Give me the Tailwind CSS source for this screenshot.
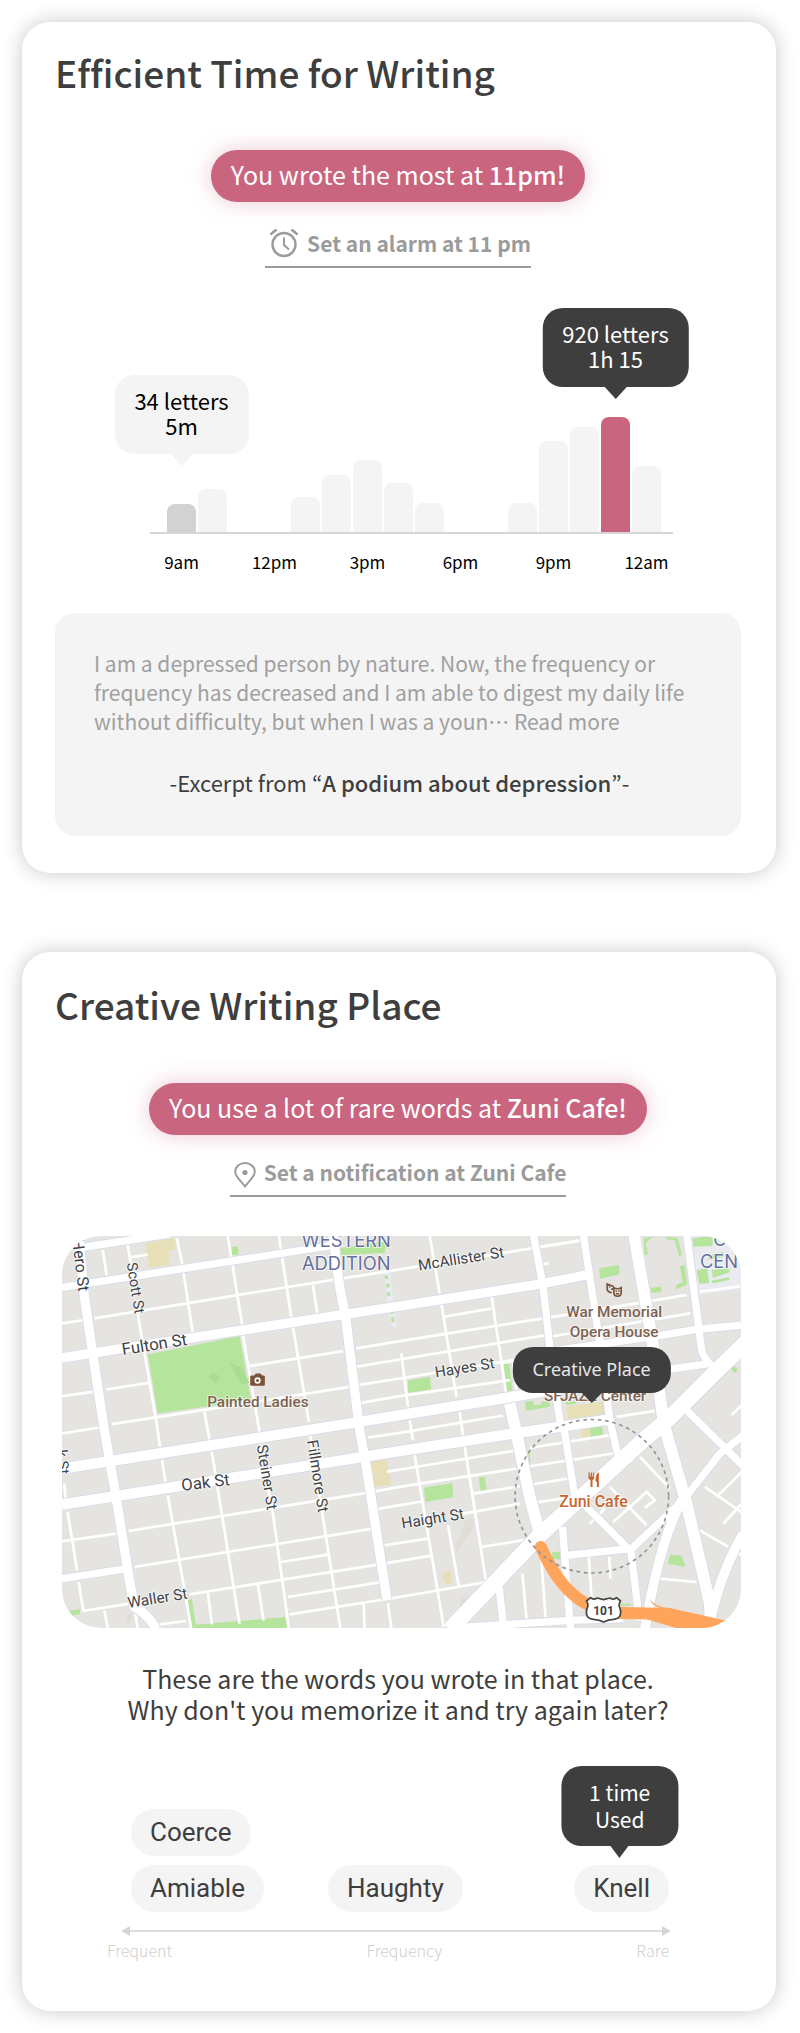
<!DOCTYPE html>
<html lang="en">
<head>
<meta charset="utf-8">
<meta name="viewport" content="width=device-width, initial-scale=1">
<title>Writing insights</title>
<script src="https://cdn.jsdelivr.net/npm/@tailwindcss/browser@4"></script>
</head>
<body class="bg-white text-[#3e3e3e] font-['Noto_Sans_CJK_KR','Noto_Sans',sans-serif] [font-variant-ligatures:none]">
<main class="flex flex-col gap-[79px] pt-[22px] pr-6 pb-[22px] pl-[22px]">

  <section class="rounded-[28px] bg-white pt-[26px] pr-[35px] pb-[37px] pl-[33px] shadow-[0_0_20px_rgba(0,0,0,0.22)]">
    <h1 class="text-[37px] leading-12 font-medium">Efficient Time for Writing</h1>
    <div class="mt-[54px] flex flex-col items-center">
      <p class="rounded-full bg-[#c9657f] px-5 pb-1 text-[25px] leading-12 text-white shadow-[0_0_22px_rgba(201,101,127,0.35)]">You wrote the most at <strong class="font-medium">11pm!</strong></p>
      <button type="button" class="mt-[18px] flex h-12 items-center gap-2 border-b-2 border-[#9b9b9b] pl-1 text-[21px] leading-7 font-bold text-[#9b9b9b]">
        <svg class="size-[30px]" viewBox="0 0 30 30" fill="none" stroke="currentColor" stroke-width="2.4" aria-hidden="true"><circle cx="15" cy="16.500" r="11.500"/><path d="M15 9.500v7.500l5 4.500" stroke-width="2"/><path d="M1.500 6.500 7.500 1.500M28.500 6.500 22.500 1.500"/></svg>
        <span>Set an alarm at 11 pm</span>
      </button>
    </div>

    <div class="mt-10 mr-[68px] ml-[95px]">
      <div class="grid h-[226px] grid-cols-16 items-end gap-0.5 border-b-2 border-[#d6d6d6] pr-3 pl-[17px]">
        <div class="relative col-start-1 h-7 rounded-t-lg bg-[#d2d2d2]">
          <div class="absolute bottom-full left-1/2 mb-[50px] -translate-x-1/2 rounded-[20px] bg-[#f4f4f4] px-5 pt-[13px] pb-4 text-center text-[22px] leading-[25px] whitespace-nowrap text-black">34 letters<br>5m
            <svg class="absolute top-full left-1/2 h-3 w-[22px] -translate-x-1/2" viewBox="0 0 22 12" fill="#f4f4f4" aria-hidden="true"><path d="M0 0h22L11 12z"/></svg>
          </div>
        </div>
        <div class="col-start-2 h-[43px] rounded-t-lg bg-[#f4f4f4]"></div>
        <div class="col-start-5 h-[35px] rounded-t-lg bg-[#f4f4f4]"></div>
        <div class="col-start-6 h-[57px] rounded-t-lg bg-[#f4f4f4]"></div>
        <div class="col-start-7 h-[72px] rounded-t-lg bg-[#f4f4f4]"></div>
        <div class="col-start-8 h-[49px] rounded-t-lg bg-[#f4f4f4]"></div>
        <div class="col-start-9 h-[29px] rounded-t-lg bg-[#f4f4f4]"></div>
        <div class="col-start-12 h-[29px] rounded-t-lg bg-[#f4f4f4]"></div>
        <div class="col-start-13 h-[91px] rounded-t-lg bg-[#f4f4f4]"></div>
        <div class="col-start-14 h-[105px] rounded-t-lg bg-[#f4f4f4]"></div>
        <div class="relative col-start-15 h-[115px] rounded-t-lg bg-[#c9657f]">
          <div class="absolute bottom-full left-1/2 mb-[30px] -translate-x-1/2 rounded-[20px] bg-[#3e3e3e] px-5 pt-[13px] pb-4 text-center text-[22px] leading-[25px] whitespace-nowrap text-white">920 letters<br>1h 15
            <svg class="absolute top-full left-1/2 h-3 w-[22px] -translate-x-1/2" viewBox="0 0 22 12" fill="#3e3e3e" aria-hidden="true"><path d="M0 0h22L11 12z"/></svg>
          </div>
        </div>
        <div class="col-start-16 h-[66px] rounded-t-lg bg-[#f4f4f4]"></div>
      </div>
      <div class="mt-4 grid grid-cols-16 gap-0.5 pr-3 pl-[17px] text-[17px] leading-6 whitespace-nowrap text-black">
        <span class="col-start-1 flex justify-center">9am</span>
        <span class="col-start-4 flex justify-center">12pm</span>
        <span class="col-start-7 flex justify-center">3pm</span>
        <span class="col-start-10 flex justify-center">6pm</span>
        <span class="col-start-13 flex justify-center">9pm</span>
        <span class="col-start-16 flex justify-center">12am</span>
      </div>
    </div>

    <div class="mt-[39px] rounded-[20px] bg-[#f4f4f4] pt-9 pr-9 pb-[39px] pl-[39px] leading-[29px]">
      <p class="text-[21px] text-[#a0a0a0]">I am a depressed person by nature. Now, the frequency or frequency has decreased and I am able to digest my daily life without difficulty, but when I was a youn<span class="font-['Noto_Sans_CJK_JP',sans-serif]" lang="ja">…</span> <a href="#read-more">Read more</a></p>
      <p class="mt-8 text-center text-[22px]">-Excerpt from “<b class="font-medium">A podium about depression</b>”-</p>
    </div>
  </section>

  <section class="rounded-[28px] bg-white pt-7 pr-[35px] pb-[49px] pl-[33px] shadow-[0_0_20px_rgba(0,0,0,0.22)]">
    <h2 class="text-[37px] leading-12 font-medium">Creative Writing Place</h2>
    <div class="mt-[55px] flex flex-col items-center">
      <p class="rounded-full bg-[#c9657f] px-5 pb-1 text-[25px] leading-12 text-white shadow-[0_0_22px_rgba(201,101,127,0.35)]">You use a lot of rare words at <strong class="font-medium">Zuni Cafe!</strong></p>
      <button type="button" class="mt-[18px] flex h-11 items-center gap-2 border-b-2 border-[#9b9b9b] pb-1 pl-1 text-[21px] leading-7 font-bold text-[#9b9b9b]">
        <svg class="mt-1.5 h-[26px] w-[22px]" viewBox="0 0 22 26" fill="none" stroke="currentColor" stroke-width="2" aria-hidden="true"><path d="M11 24.500C6 18 1.200 14.500 1.200 9.800a9.800 8.800 0 0 1 19.600 0C20.800 14.500 16 18 11 24.500Z"/><circle cx="11" cy="10.500" r="2.600" fill="currentColor" stroke="none"/></svg>
        <span>Set a notification at Zuni Cafe</span>
      </button>
    </div>

    <div class="relative mt-[39px] ml-[7px]">
      <svg class="block w-full rounded-[39px]" viewBox="38 48 2035 1176" role="img" aria-label="Map around Zuni Cafe" font-family="Roboto, sans-serif" font-weight="500">
        <rect x="38" y="48" width="2035" height="1176" fill="#e5e4e0"/>
        <path fill="#e9ebf0" d="M1915 48H2073V205L1945 225zM1000 150h20l22 170h-16z"/>
        <g fill="#b5e59c">
          <path d="M295 403 570 348 605 540 325 580ZM545 82l20-4 3 26-22 2zM872 84l135-20v34l-133 8zM415 1140l12-5 12 78 268-23 5 34H425zM60 1172l32-6v16l-25 4zM1075 480l66-10 4 38-70 10zM1362 432l16-2 10 82-20 2zM1425 545l25-3 4 14 20-3v-8l26-3v18l-70 12zM1123 802l85-13 3 42-84 14zM1287 772l18-3 6 40-18 4zM1647 145l60-10 2 28-58 13zM1782 55l30-7-24 20 6 35-10 3zM1850 50l33 3 13 52-8 4-14-48-24-3zM1890 138l14-3 8 58-34 15v-12l20-10zM1802 204l30-5 3 16-30 4zM1928 55l60-7v30l-58 2zM1940 150l32-6 6 45-30 3zM1975 105l45-10v15l-45 10zM1985 150l50-6 6 12-52 18zM1985 182l52-10v8l-50 10zM2042 445l10-8 12 12-10 10zM1860 1003l35 3 12 34-54-10zM1507 995l25-1v24l-25-3zM1620 615l36-5 4 36-38 4zM1712 1150h30v6h-30zM1546 545l28-2 8 8-32 4zM1434 692h4l4 36h-5zM1005 165l10 2v10h-10zM1010 190l10 2v10h-10zM1012 215l10 2v10h-10zM1022 270l9 2v10h-9zM1025 290l9 2v14h-9z"/>
          <path fill="#a9dd91" d="M540 425l35 18 25 45-25 5zM477 472l14-15 23 13-15 16z"/>
        </g>
        <path fill="#e6dfb7" d="M287 68l90-15v35l-20 4 5 42-62 10zM962 725l50-8 12 75-50 8zM1548 560l115-16 8 36-115 18zM1595 620l25-4 3 33-26 4zM1175 1060l28-10 6 40-22 2z"/>
        <path fill="#dfddd6" d="M1245 900l30-5-10 40-45 60-5-20 22-35zM1235 1130l30 3-30 60-12-8zM235 1180l15 5-8 22-12-4z"/>

        <g fill="none" stroke="#fff" stroke-width="8">
          <path d="M38 310l82-12M135 295l585-95 160-25 170-27 540-86M38 528l92-13M170 508l128-20M187 612l273-42 440-70M600 438l280-45M38 640l112-18M240 112l55-8M920 385l130-22 430-68M920 440l130-22 440-73M925 495l125-20 420-68M935 548l115-20 330-48M160 90l12 75M235 75l12 75M265 280l55 320 12 82M338 720l10 65M355 825l70 398M382 55l16 75 32 210M535 48l43 267M580 345l50 290M688 48l37 242M730 320l48 285M790 195l13 85M465 575l15 85M487 695l83 515M630 670l40 210 48 343M782 645l38 245 52 333M55 875l28 175M88 1085l14 87M45 790l5 60M165 1170l10 53M258 1180l6 43M475 1118l12 94M625 1092l17 108M942 1150l3 73M1015 1150l10 73"/>
          <path d="M38 963l162-23M238 932l712-114 100-18 350-55M255 1040l715-115M420 1122l565-89 160-27M330 1212l80-10M695 1025l140-22M715 1130l275-44M720 1182l330-52 260-45M100 1172l140-22M955 652l95-14 310-52M1012 754l100-16 278-46M985 866l135-23M1240 880l170-30M1005 975l130-20M1270 820l140-22M1295 980l135-22"/>
          <path d="M1140 48l30 172M1175 250l45 280M1325 225l45 300M1185 290l140-25M1475 80l115-18M1475 133l22-3M1500 292l260-42 150-25M1950 215l120-16M1500 350l420-70M1055 400l20 160M1350 430l45-8M1390 430l10 80M1230 575l10 70M1080 600l10 60M1095 705l87 515M1245 680l65 410M1195 915l32 183M1700 590l115-18M1440 683l240-38M1440 738l250-38M1450 792l110-18M1460 846l100-14M1418 1060l12 135M1475 1020l12 170M1617 1010l8 120M1678 1010l4 65M1770 710l90 95M1680 800l110 115M1690 905l100-90 25 25-30 22M1620 910l45-45M1965 800l115 80M2000 830l80-80M2020 910l60-65M1950 930l85 50M1830 1075l110 10M2045 585l35-35M2060 998l15 6"/>
        </g>

        <g fill="none" stroke-linejoin="round">
          <g stroke="#d9daea">
            <path stroke-width="27" d="M85 84 360 42M38 202 850 76M38 1075l195-30M1510 392 1820 348 1940 328 2080 315M1860 447l110-16"/>
            <path stroke-width="33" d="M38 413 870 285 1050 258 1470 192 1610 165M88 48 105 230 130 400 165 630 200 830 240 1080 255 1160Q295 1180 320 1226M850 48 870 200 888 290 905 430 930 630 950 740 1012 1138"/>
            <path stroke-width="36" d="M38 745 900 610 1050 585 1400 528 1860 447M38 853 1050 693 1390 640 1690 596"/>
            <path stroke-width="27" d="M1450 40 1480 200 1502 400 1530 600 1545 640 1575 830M1538 920 1562 1226M1600 40 1650 370 1680 600 1707 720M1910 40 1955 390Q1960 415 2000 450M1590 840 1740 990 1900 840 2010 700 2080 645M1900 560 2080 738M1740 985 1550 1005M1743 990 1768 1200M1200 1223 1560 1200 1720 1195M1348 1100 1362 1226"/>
            <path stroke-width="34" d="M1896 840Q1830 960 1785 1226M2080 940Q2020 1040 1985 1180"/>
            <path stroke-width="40" d="M1380 550 1400 640 1440 830 1470 940M1850 640 1910 850 1980 1150 1982 1226M1752 40 1810 380 1840 600 1855 660"/>
            <path stroke-width="52" d="M2090 365 1990 462 1860 592 1780 660 1590 835 1470 945 1200 1228"/>
          </g>
          <g stroke="#fff">
            <path stroke-width="22" d="M85 84 360 42M38 202 850 76M38 1075l195-30M1510 392 1820 348 1940 328 2080 315M1860 447l110-16"/>
            <path stroke-width="28" d="M38 413 870 285 1050 258 1470 192 1610 165M88 48 105 230 130 400 165 630 200 830 240 1080 255 1160Q295 1180 320 1226M850 48 870 200 888 290 905 430 930 630 950 740 1012 1138"/>
            <path stroke-width="31" d="M38 745 900 610 1050 585 1400 528 1860 447M38 853 1050 693 1390 640 1690 596"/>
            <path stroke-width="22" d="M1450 40 1480 200 1502 400 1530 600 1545 640 1575 830M1538 920 1562 1226M1600 40 1650 370 1680 600 1707 720M1910 40 1955 390Q1960 415 2000 450M1590 840 1740 990 1900 840 2010 700 2080 645M1900 560 2080 738M1740 985 1550 1005M1743 990 1768 1200M1200 1223 1560 1200 1720 1195M1348 1100 1362 1226"/>
            <path stroke-width="29" d="M1896 840Q1830 960 1785 1226M2080 940Q2020 1040 1985 1180"/>
            <path stroke-width="35" d="M1380 550 1400 640 1440 830 1470 940M1850 640 1910 850 1980 1150 1982 1226M1752 40 1810 380 1840 600 1855 660"/>
            <path stroke-width="47" d="M2090 365 1990 462 1860 592 1780 660 1590 835 1470 945 1200 1228"/>
          </g>
          <path stroke="#ffa45b" stroke-width="36" stroke-linecap="round" d="M1473 980C1510 1065 1560 1130 1625 1158 1690 1190 1770 1172 1860 1184L2000 1215"/>
          <path fill="#ffa45b" d="M1800 1135q12 25 60 28l170 38-60 24H1885l-100-30 60-30q-40-5-45-30z"/>
          <circle cx="1626" cy="828" r="230" stroke="#949494" stroke-width="5" stroke-dasharray="11 11"/>
        </g>

        <g stroke="#fff" stroke-width="6" stroke-linejoin="round" stroke-opacity=".7" paint-order="stroke">
          <g fill="#3f4348" font-size="46" font-weight="400">
            <text font-size="50" transform="translate(220 405) rotate(-9)">Fulton St</text>
            <text font-size="50" transform="translate(398 812) rotate(-7)">Oak St</text>
            <text transform="translate(237 1163) rotate(-9)">Waller St</text>
            <text transform="translate(1108 152) rotate(-9)">McAllister St</text>
            <text transform="translate(1158 472) rotate(-9)">Hayes St</text>
            <text transform="translate(1058 925) rotate(-9)">Haight St</text>
            <text font-size="44" transform="translate(232 130) rotate(81)">Scott St</text>
            <text font-size="48" transform="translate(68 58) rotate(83)">Hero St</text>
            <text font-size="46" transform="translate(622 676) rotate(81)">Steiner St</text>
            <text font-size="46" transform="translate(772 662) rotate(81)">Fillmore St</text>
            <text font-size="44" transform="translate(22 690) rotate(84)">k St</text>
          </g>
          <g fill="#7d6251" font-size="46" text-anchor="middle">
            <text x="625" y="562">Painted Ladies</text>
            <text x="1693" y="292">War Memorial</text>
            <text x="1693" y="350">Opera House</text>
            <text x="1636" y="543">SFJAZZ Center</text>
            <text x="1631" y="860" font-size="48" fill="#c9652f">Zuni Cafe</text>
          </g>
          <g fill="#66709f" font-size="55" font-family="Inter, sans-serif" font-weight="400">
            <text x="890" y="82" text-anchor="middle">WESTERN</text>
            <text x="890" y="149" text-anchor="middle">ADDITION</text>
            <text x="1990" y="78">C</text>
            <text x="1950" y="145">CEN</text>
          </g>
        </g>
        <path fill="#7b5138" d="M607 466h7l5-6h14l5 6h4q4 0 4 4v23q0 4-4 4h-36q-4 0-4-4v-23q0-4 5-4z"/>
        <circle cx="624" cy="481" r="7" fill="#7b5138" stroke="#fff" stroke-width="5"/>
        <g fill="none" stroke="#7b5138" stroke-width="5"><path d="M1692 200Q1682 196 1672 192V207Q1672 216 1686 218M1678 201h3M1684 207h6M1692 203q11 6 22 0v14q0 11-11 11t-11-11zM1697 213h4M1705 213h4M1698 221h10"/></g>
        <path fill="#c9652f" d="M1616 757h4v12h3v-12h4v12h3v-12h3v16q0 5-5 6v21h-6v-21q-6-1-6-6zM1645 757q-8 5-8 25l4 3v15h6v-43z"/>
        <path fill="#fff" stroke="#454545" stroke-width="5" stroke-linejoin="round" d="M1622 1132q8 8 20 1l19 5 19-5q12 7 20-1l12 10q-8 12-1 23 7 30-20 32-15 0-30 8-15-8-30-8-27-2-20-32 7-11-1-23z"/>
        <text x="1661" y="1183" text-anchor="middle" font-size="36" font-weight="700" fill="#3f3f3f">101</text>
      </svg>
      <div class="absolute top-[111px] left-[78%] -translate-x-1/2 rounded-[20px] bg-[#3e3e3e] px-5 pt-2.5 pb-3 font-['Noto_Sans',sans-serif] text-[18px] leading-6 whitespace-nowrap text-[#e6e6e6]">Creative Place
        <svg class="absolute top-full left-1/2 h-2.5 w-5 -translate-x-1/2" viewBox="0 0 20 10" fill="#3e3e3e" aria-hidden="true"><path d="M0 0h20L10 10z"/></svg>
      </div>
    </div>

    <p class="mt-[35px] text-center text-[25px] leading-[31px]">These are the words you wrote in that place.<br>Why don't you memorize it and try again later?</p>

    <div class="mt-[84px] mr-[72px] ml-[76px] flex items-end font-['Roboto',sans-serif] text-[26px] leading-[47px]">
      <div class="flex flex-col items-start gap-[9px]">
        <button type="button" class="rounded-full bg-[#f4f4f4] px-[19px]">Coerce</button>
        <button type="button" class="rounded-full bg-[#f4f4f4] px-[19px]">Amiable</button>
      </div>
      <button type="button" class="ml-16 rounded-full bg-[#f4f4f4] px-[19px]">Haughty</button>
      <div class="relative ml-auto">
        <button type="button" class="rounded-full bg-[#f4f4f4] px-[19px]">Knell</button>
        <div class="absolute bottom-full left-[48%] mb-[19px] -translate-x-1/2 rounded-[20px] bg-[#3e3e3e] px-7 py-[13px] text-center font-['Noto_Sans_CJK_KR',sans-serif] text-[21px] leading-[27px] whitespace-nowrap text-white">1 time<br>Used
          <svg class="absolute top-full left-1/2 h-3 w-[18px] -translate-x-1/2" viewBox="0 0 18 12" fill="#3e3e3e" aria-hidden="true"><path d="M0 0h18L9 12z"/></svg>
        </div>
      </div>
    </div>
    <div class="mt-[14px] mr-[70px] ml-[66px] flex items-center text-[#d6d6d6]">
      <svg class="h-2.5 w-[9px]" viewBox="0 0 9 10" fill="currentColor" aria-hidden="true"><path d="M9 0v10L0 5z"/></svg>
      <div class="h-0.5 grow bg-[#dedede]"></div>
      <svg class="h-2.5 w-[9px]" viewBox="0 0 9 10" fill="currentColor" aria-hidden="true"><path d="M0 0v10l9-5z"/></svg>
    </div>
    <div class="mt-0.5 mr-[72px] ml-[52px] flex justify-between text-[16px] leading-6 font-light text-[#cfcfcf]">
      <span>Frequent</span><span>Frequency</span><span>Rare</span>
    </div>
  </section>
</main>
</body>
</html>
